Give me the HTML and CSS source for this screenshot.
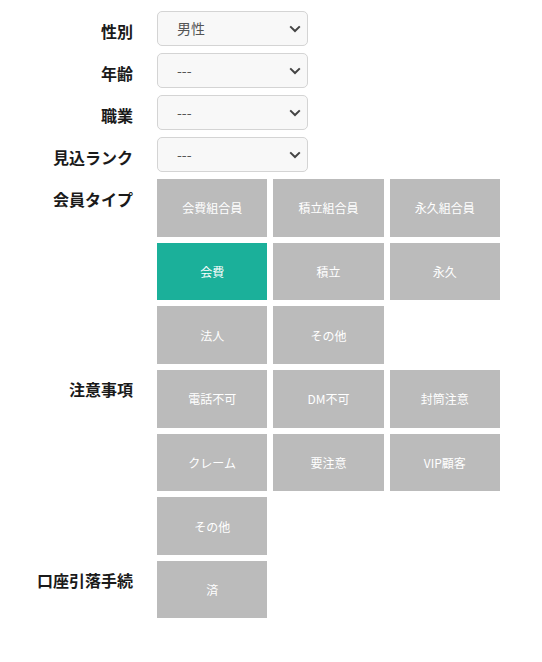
FILE: index.html
```html
<!DOCTYPE html>
<html lang="ja">
<head>
<meta charset="utf-8">
<link rel="stylesheet" href="styles.css">
</head>
<body>
<div class="form">
  <div class="label">性別</div>
  <div class="field">
    <div class="select-wrap">
      <select class="select"><option>男性</option></select>
      <svg class="chev" width="12" height="8" viewBox="0 0 12 8"><path d="M1.2 1.4 L6 6 L10.8 1.4" fill="none" stroke="#444" stroke-width="2"/></svg>
    </div>
  </div>

  <div class="label">年齢</div>
  <div class="field">
    <div class="select-wrap">
      <select class="select"><option>---</option></select>
      <svg class="chev" width="12" height="8" viewBox="0 0 12 8"><path d="M1.2 1.4 L6 6 L10.8 1.4" fill="none" stroke="#444" stroke-width="2"/></svg>
    </div>
  </div>

  <div class="label">職業</div>
  <div class="field">
    <div class="select-wrap">
      <select class="select"><option>---</option></select>
      <svg class="chev" width="12" height="8" viewBox="0 0 12 8"><path d="M1.2 1.4 L6 6 L10.8 1.4" fill="none" stroke="#444" stroke-width="2"/></svg>
    </div>
  </div>

  <div class="label">見込ランク</div>
  <div class="field">
    <div class="select-wrap">
      <select class="select"><option>---</option></select>
      <svg class="chev" width="12" height="8" viewBox="0 0 12 8"><path d="M1.2 1.4 L6 6 L10.8 1.4" fill="none" stroke="#444" stroke-width="2"/></svg>
    </div>
  </div>

  <div class="label">会員タイプ</div>
  <div class="tiles">
    <div class="tile">会費組合員</div>
    <div class="tile">積立組合員</div>
    <div class="tile">永久組合員</div>
    <div class="tile active">会費</div>
    <div class="tile">積立</div>
    <div class="tile">永久</div>
    <div class="tile">法人</div>
    <div class="tile">その他</div>
  </div>

  <div class="label">注意事項</div>
  <div class="tiles">
    <div class="tile">電話不可</div>
    <div class="tile">DM不可</div>
    <div class="tile">封筒注意</div>
    <div class="tile">クレーム</div>
    <div class="tile">要注意</div>
    <div class="tile">VIP顧客</div>
    <div class="tile">その他</div>
  </div>

  <div class="label">口座引落手続</div>
  <div class="tiles">
    <div class="tile">済</div>
  </div>
</div>
</body>
</html>
```

FILE: styles.css
```css
html, body {
  margin: 0;
  padding: 0;
  background: #fff;
}
body {
  font-family: "Noto Sans CJK JP", "Noto Sans", sans-serif;
}
.form {
  display: grid;
  grid-template-columns: 133px 343px;
  column-gap: 24px;
  row-gap: 7px;
  padding-top: 11px;
  align-items: start;
}
.label {
  font-size: 16px;
  font-weight: 700;
  line-height: 22px;
  padding-top: 8.5px;
  text-align: right;
  color: #1a1a1a;
  white-space: nowrap;
}
.select-wrap {
  position: relative;
  width: 151px;
  height: 35px;
}
.select {
  appearance: none;
  -webkit-appearance: none;
  box-sizing: border-box;
  width: 151px;
  height: 35px;
  margin: 0;
  padding: 0 0 0 19px;
  border: 1px solid #d4d4d4;
  border-radius: 5px;
  background: #f8f8f8;
  color: #555;
  font-family: "Noto Sans CJK JP", "Noto Sans", sans-serif;
  font-size: 14px;
  line-height: 33px;
}
.chev {
  position: absolute;
  right: 7px;
  top: 14px;
  pointer-events: none;
}
.tiles {
  display: grid;
  grid-template-columns: repeat(3, 1fr);
  gap: 6px;
  margin-bottom: -1px;
}
.tile {
  height: 57.67px;
  background: #bbbbbb;
  color: #fff;
  font-size: 12px;
  display: flex;
  align-items: center;
  justify-content: center;
}
.tile.active {
  background: #1bb09a;
}
```
